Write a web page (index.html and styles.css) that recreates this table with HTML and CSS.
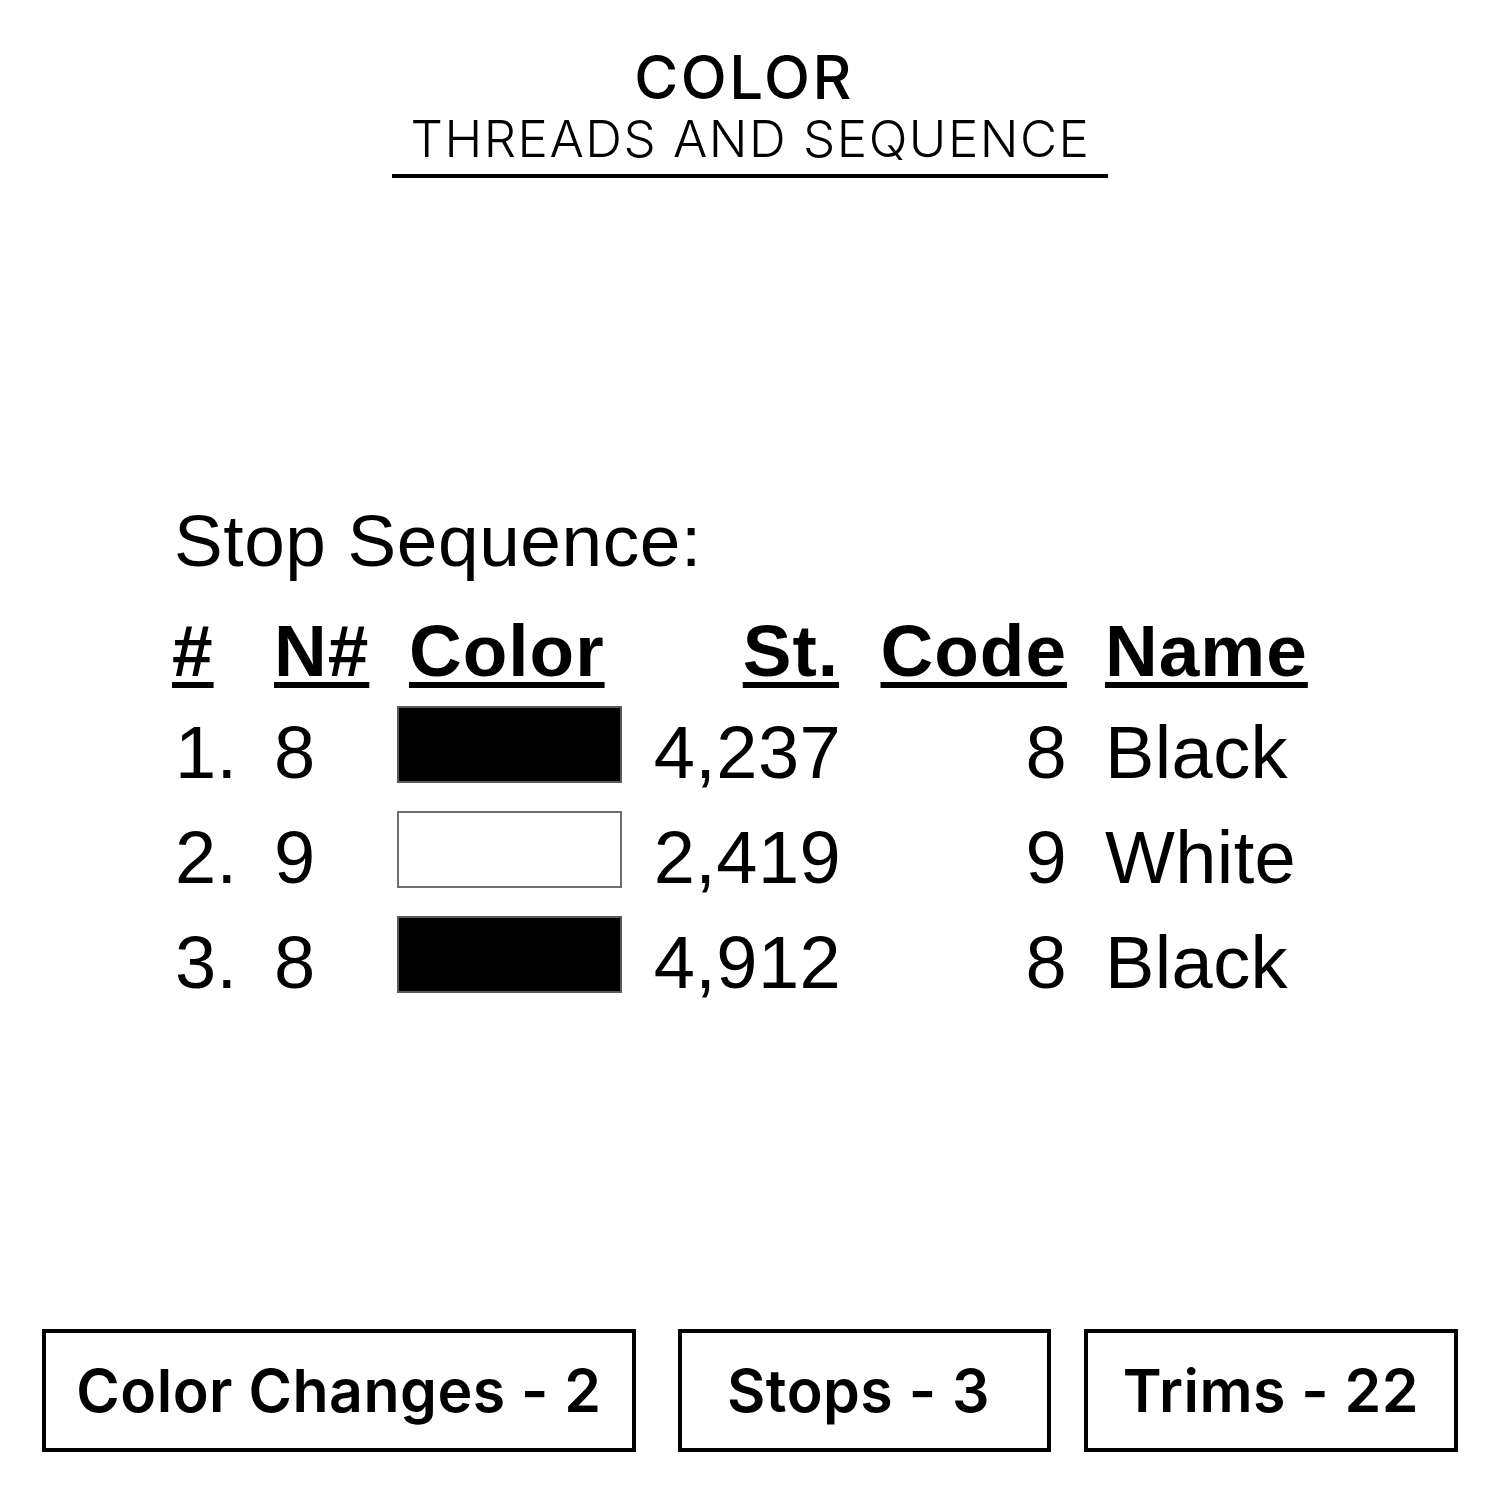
FILE: index.html
```html
<!DOCTYPE html>
<html>
<head>
<meta charset="utf-8">
<link rel="stylesheet" href="styles.css">
</head>
<body>
<div class="page">
  <header class="head">
    <div class="title">COLOR</div>
    <div class="subtitle">THREADS AND SEQUENCE</div>
  </header>

  <section class="seq">
    <div class="seq-title">Stop Sequence:</div>
    <div class="grid">
      <div class="th c1">#</div>
      <div class="th c2">N#</div>
      <div class="th c3">Color</div>
      <div class="th c4">St.</div>
      <div class="th c5">Code</div>
      <div class="th c6">Name</div>

      <div class="td c1">1.</div>
      <div class="td c2">8</div>
      <div class="sw black"></div>
      <div class="td c4">4,237</div>
      <div class="td c5">8</div>
      <div class="td c6">Black</div>

      <div class="td c1">2.</div>
      <div class="td c2">9</div>
      <div class="sw white"></div>
      <div class="td c4">2,419</div>
      <div class="td c5">9</div>
      <div class="td c6">White</div>

      <div class="td c1">3.</div>
      <div class="td c2">8</div>
      <div class="sw black"></div>
      <div class="td c4">4,912</div>
      <div class="td c5">8</div>
      <div class="td c6">Black</div>
    </div>
  </section>

  <footer class="stats">
    <div class="box b1">Color Changes - 2</div>
    <div class="box b2">Stops - 3</div>
    <div class="box b3">Trims - 22</div>
  </footer>
</div>
</body>
</html>
```

FILE: styles.css
```css
html, body {
  margin: 0;
  padding: 0;
  background: #fff;
  color: #000;
}

.page {
  width: 1500px;
  height: 1500px;
  display: flex;
  flex-direction: column;
}

.head {
  display: flex;
  flex-direction: column;
  align-items: center;
  padding-top: 47px;
  font-family: Inter, "DejaVu Sans", sans-serif;
}

.title {
  font-size: 60px;
  line-height: 60px;
  font-weight: 500;
  letter-spacing: 2.5px;
  margin-right: 12px;
}

.subtitle {
  margin-top: 6px;
  font-size: 51px;
  line-height: 52px;
  font-weight: 300;
  letter-spacing: 1.5px;
  padding: 0 18px 9px 19px;
  border-bottom: 4px solid #000;
}

.seq {
  margin-top: 326px;
  padding-left: 172px;
  font-family: "Liberation Sans", Arial, sans-serif;
}

.seq-title {
  font-size: 73px;
  line-height: 73px;
  padding-left: 2px;
  letter-spacing: 0.6px;
}

.grid {
  margin-top: 37px;
  display: grid;
  grid-template-columns: 102px 123px 225px 216px 229px 300px;
  grid-template-rows: 78px repeat(3, 105px);
  align-items: center;
}

.th {
  font-weight: bold;
  font-size: 73px;
  line-height: 73px;
  letter-spacing: 1px;
  text-decoration: underline;
  text-decoration-thickness: 6px;
  text-underline-offset: 6px;
  align-self: start;
}

.td {
  font-size: 74px;
  line-height: 74px;
  letter-spacing: 0.4px;
  padding-top: 16px;
}

.c1.td { padding-left: 3px; }
.c3.th { padding-left: 12px; }
.c4, .c5 { text-align: right; }
.c4.th { margin-right: -1px; }
.c4.td { margin-right: -3px; }
.c6 { padding-left: 38px; }

.sw {
  height: 77px;
  box-sizing: border-box;
  border: 2px solid #6e6e6e;
}
.sw.black { background: #000; border-color: #5a5a5a; }
.sw.white { background: #fff; }

.stats {
  margin-top: auto;
  margin-bottom: 48px;
  display: flex;
  padding-left: 42px;
  font-family: Inter, "DejaVu Sans", sans-serif;
}

.box {
  box-sizing: border-box;
  height: 123px;
  border: 4px solid #000;
  display: flex;
  align-items: center;
  justify-content: center;
  font-size: 59px;
  font-weight: 600;
  letter-spacing: 0.5px;
}

.b1 { width: 594px; }
.b2 { width: 373px; margin-left: 42px; padding-right: 12px; }
.b3 { width: 374px; margin-left: 33px; }
```
